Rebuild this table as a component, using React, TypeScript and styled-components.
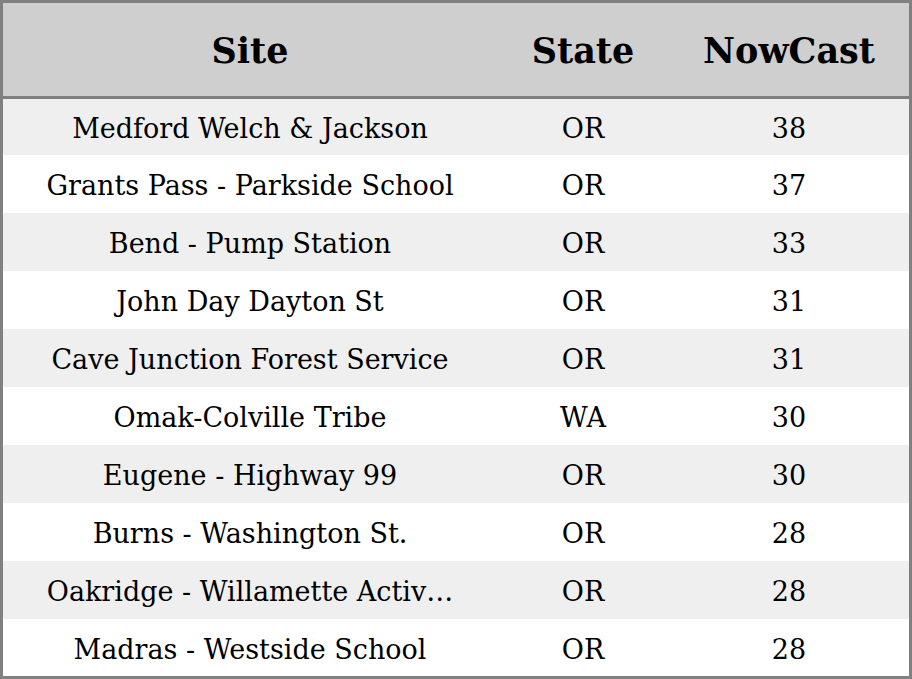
import styled, { createGlobalStyle } from 'styled-components';

type Reading = {
  site: string;
  state: string;
  nowcast: number;
};

const readings: Reading[] = [
  { site: 'Medford Welch & Jackson', state: 'OR', nowcast: 38 },
  { site: 'Grants Pass - Parkside School', state: 'OR', nowcast: 37 },
  { site: 'Bend - Pump Station', state: 'OR', nowcast: 33 },
  { site: 'John Day Dayton St', state: 'OR', nowcast: 31 },
  { site: 'Cave Junction Forest Service', state: 'OR', nowcast: 31 },
  { site: 'Omak-Colville Tribe', state: 'WA', nowcast: 30 },
  { site: 'Eugene - Highway 99', state: 'OR', nowcast: 30 },
  { site: 'Burns - Washington St.', state: 'OR', nowcast: 28 },
  { site: 'Oakridge - Willamette Activ…', state: 'OR', nowcast: 28 },
  { site: 'Madras - Westside School', state: 'OR', nowcast: 28 },
];

const GlobalStyle = createGlobalStyle`
  html, body {
    margin: 0;
    padding: 0;
    background: #ffffff;
  }
  body {
    font-family: 'DejaVu Serif', 'Liberation Serif', serif;
    color: #000000;
  }
`;

const Board = styled.div`
  box-sizing: border-box;
  width: 912px;
  height: 679px;
  border: 3px solid #808080;
  display: flex;
  flex-direction: column;
  overflow: hidden;
`;

const Columns = `
  display: grid;
  grid-template-columns: 494px 172px 240px;
  align-items: center;
`;

const HeaderRow = styled.div`
  ${Columns}
  height: 93px;
  flex: none;
  background: #cfcfcf;
  border-bottom: 3px solid #808080;
`;

const HeaderCell = styled.div`
  text-align: center;
  font-size: 35px;
  font-weight: bold;
  padding-top: 1px;
`;

const Body = styled.div`
  flex: 1;
  min-height: 0;
  overflow: hidden;
`;

const Row = styled.div<{ $striped: boolean }>`
  ${Columns}
  height: 58px;
  background: ${(p) => (p.$striped ? '#efefef' : '#ffffff')};

  &:first-child {
    height: 56px;
  }
`;

const Cell = styled.div`
  text-align: center;
  font-size: 27px;
  padding-top: 2px;
  white-space: nowrap;
  overflow: hidden;
`;

export default function App() {
  return (
    <>
      <GlobalStyle />
      <Board>
        <HeaderRow>
          <HeaderCell>Site</HeaderCell>
          <HeaderCell>State</HeaderCell>
          <HeaderCell>NowCast</HeaderCell>
        </HeaderRow>
        <Body>
          {readings.map((r, i) => (
            <Row key={r.site} $striped={i % 2 === 0}>
              <Cell>{r.site}</Cell>
              <Cell>{r.state}</Cell>
              <Cell>{r.nowcast}</Cell>
            </Row>
          ))}
        </Body>
      </Board>
    </>
  );
}
